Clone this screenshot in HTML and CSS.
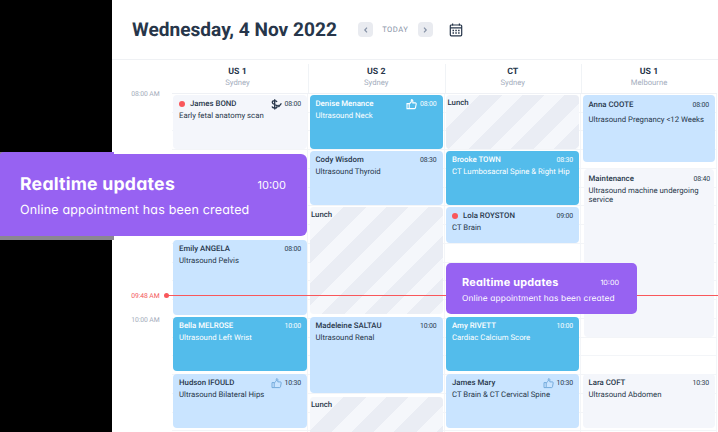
FILE: index.html
```html
<!DOCTYPE html>
<html lang="en">
<head>
<meta charset="utf-8">
<title>Schedule</title>
<link rel="stylesheet" href="styles.css">
</head>
<body>
<svg class="defs" width="0" height="0" aria-hidden="true">
  <symbol id="thumb" viewBox="0 0 11 11"><path d="M1 4.6h2.2v5H1zM3.2 5 5.3 3V1.2c0-.9 1.5-.7 1.5.5v2.2h2.5c.7 0 1 .5.9 1.1l-.7 3.7c-.1.6-.5.9-1 .9H3.2"/></symbol>
</svg>
<div class="app">
  <aside class="side"></aside>
  <main class="main">
    <header class="top">
      <h1>Wednesday, 4 Nov 2022</h1>
      <span class="step"><svg width="14" height="14" viewBox="0 0 14 14"><path d="M8 4.7 5.8 7 8 9.3"/></svg></span>
      <span class="today">TODAY</span>
      <span class="step"><svg width="14" height="14" viewBox="0 0 14 14"><path d="M6 4.7 8.2 7 6 9.3"/></svg></span>
      <svg class="cal" width="14" height="14" viewBox="0 0 14 14"><rect x="1.300" y="2" width="11.400" height="10.800" rx="1"/><path d="M1.300 4.800h11.400M3.600.5v2M10.400.5v2"/><path class="dots" d="M3.500 7.500h7.500M3.500 10h7.500"/></svg>
    </header>
    <section class="board">
      <div class="gutter">
        <span class="hour first">08:00 AM</span>
        <span class="hour now-label">09:48 AM</span>
        <span class="hour">10:00 AM</span>
      </div>
      <div class="col start">
        <div class="head"><b>US 1</b><span>Sydney</span></div>
        <div class="slots">
          <article class="card grey h54"><div class="row"><i class="dot"></i><b>James BOND</b><svg class="pay" width="11" height="11" viewBox="0 0 11 11"><path d="M6 2.900C5.600 2 4.800 1.700 3.700 1.700 2.200 1.700 1.300 2.400 1.300 3.400c0 2.400 4.800 1.400 4.800 4 0 1-.9 1.700-2.400 1.700C2.300 9.100 1.300 8.500 1 7.500M3.700.3v10.200M6.600 6l1.300 1.400 2.500-3"/></svg><time>08:00</time></div><p>Early fetal anatomy scan</p></article>
          <article class="card light emily"><div class="row"><b>Emily ANGELA</b><time>08:00</time></div><p>Ultrasound Pelvis</p></article>
          <article class="card blue h54 g2"><div class="row"><b>Bella MELROSE</b><time>10:00</time></div><p>Ultrasound Left Wrist</p></article>
          <article class="card light h54 g3"><div class="row"><b>Hudson IFOULD</b><svg class="thumb" width="11" height="11"><use href="#thumb"/></svg><time>10:30</time></div><p>Ultrasound Bilateral Hips</p></article>
        </div>
      </div>
      <div class="col">
        <div class="head"><b>US 2</b><span>Sydney</span></div>
        <div class="slots">
          <article class="card blue h54"><div class="row"><b>Denise Menance</b><svg class="thumb" width="11" height="11"><use href="#thumb"/></svg><time>08:00</time></div><p>Ultrasound Neck</p></article>
          <article class="card light h54 g2"><div class="row"><b>Cody Wisdom</b><time>08:30</time></div><p>Ultrasound Thyroid</p></article>
          <article class="card lunch long"><b>Lunch</b></article>
          <article class="card light madeleine"><div class="row"><b>Madeleine SALTAU</b><time>10:00</time></div><p>Ultrasound Renal</p></article>
          <article class="card lunch last"><b>Lunch</b></article>
        </div>
      </div>
      <div class="col">
        <div class="head"><b>CT</b><span>Sydney</span></div>
        <div class="slots">
          <article class="card lunch h54"><b>Lunch</b></article>
          <article class="card blue h54 g2"><div class="row"><b>Brooke TOWN</b><time>08:30</time></div><p>CT Lumbosacral Spine &amp; Right Hip</p></article>
          <article class="card light lola"><div class="row"><i class="dot"></i><b>Lola ROYSTON</b><time>09:00</time></div><p>CT Brain</p></article>
          <article class="card blue h54 amy"><div class="row"><b>Amy RIVETT</b><time>10:00</time></div><p>Cardiac Calcium Score</p></article>
          <article class="card light h54 g3"><div class="row"><b>James Mary</b><svg class="thumb" width="11" height="11"><use href="#thumb"/></svg><time>10:30</time></div><p>CT Brain &amp; CT Cervical Spine</p></article>
        </div>
      </div>
      <div class="col end">
        <div class="head"><b>US 1</b><span>Melbourne</span></div>
        <div class="slots">
          <article class="card light anna"><div class="row"><b>Anna COOTE</b><time>08:00</time></div><p>Ultrasound Pregnancy &lt;12 Weeks</p></article>
          <article class="card grey maint"><div class="row"><b>Maintenance</b><time>08:40</time></div><p>Ultrasound machine undergoing<br>service</p></article>
          <article class="card grey h54 lara"><div class="row"><b>Lara COFT</b><time>10:30</time></div><p>Ultrasound Abdomen</p></article>
        </div>
      </div>
    </section>
  </main>
  <div class="now"></div>
  <div class="toast-shade"></div>
  <div class="toast-edge"></div>
  <div class="toast big"><div class="trow"><strong>Realtime updates</strong><time>10:00</time></div><p>Online appointment has been created</p></div>
  <div class="toast small"><div class="trow"><strong>Realtime updates</strong><time>10:00</time></div><p>Online appointment has been created</p></div>
</div>
</body>
</html>
```
FILE: styles.css
```css
* { box-sizing: border-box; }
body { margin: 0; overflow: hidden; background: #fff; color: #27364a; font-family: Roboto, "Liberation Sans", sans-serif; text-rendering: geometricPrecision; }
p, h1 { margin: 0; }
.defs { position: absolute; }
svg { fill: none; stroke: currentColor; flex: none; }
.app { position: relative; display: flex; width: 718px; height: 432px; overflow: hidden; }
.side { width: 112px; flex: none; background: #000; }
.main { width: 606px; flex: none; }

.top { display: flex; align-items: center; height: 60px; padding-left: 20px; border-bottom: 1px solid #eff1f4; }
h1 { width: 226px; flex: none; font-size: 19.1px; line-height: 28px; font-weight: 700; color: #27364a; white-space: nowrap; }
.step { width: 15px; height: 15px; border-radius: 4px; background: #e9ebf0; color: #8591a5; display: grid; place-items: center; }
.step svg { stroke-width: 1.2; }
.today { width: 44.5px; text-align: center; font-size: 7.6px; letter-spacing: .5px; color: #8994a7; }
.cal { margin-left: 16.500px; color: #27364a; stroke-width: 1.2; }
.cal .dots { stroke-dasharray: 1.5 1.3; stroke-width: 1.3; }

.board { display: flex; height: 372px; }
.gutter { width: 60px; flex: none; padding: 28.5px 12.5px 0 0; display: flex; flex-direction: column; align-items: flex-end; }
.hour { font-size: 6.8px; line-height: 10px; color: #a4adbb; letter-spacing: -.1px; white-space: nowrap; }
.now-label { margin-top: 192px; color: #f35b60; }
.now-label + .hour { margin-top: 14px; }
.col { width: 136.5px; flex: none; }
.col.start, .col.end { width: 136px; }
.head { height: 34px; padding: 6px 0 0; border-bottom: 1px solid #eff1f5; text-align: center; display: flex; flex-direction: column; }
.start .head { padding-right: 5px; }
.head b { font-size: 8.8px; line-height: 12px; font-weight: 700; }
.head span { font-size: 7.7px; line-height: 10px; color: #a4adbd; }
.col + .col .head { background: linear-gradient(#f0f3f6, #f0f3f6) 0 100% / 1px 29px no-repeat; }
.slots { height: 338px; padding: 1px 1px 0 1.5px; display: flex; flex-direction: column; border-right: 1px solid #f3f5f8; background: repeating-linear-gradient(#fff 0 17.75px, #f3f5f8 17.75px 18.75px); }
.start .slots { padding: 1px 0 0 1px; }
.card { flex: none; border-radius: 4px; padding: 4px 6px 0 6px; overflow: hidden; font-size: 7.78px; }
.row { display: flex; align-items: center; height: 10px; }
.row b, .lunch b { font-size: 7.82px; line-height: 10px; font-weight: 500; white-space: nowrap; }
.lunch b { display: block; }
.row time { font-size: 6.9px; line-height: 10px; margin-left: auto; letter-spacing: -.13px; }
.row svg { margin-left: auto; }
.row svg + time { margin-left: 2.5px; }
.card p { margin-top: 2px; line-height: 10px; white-space: nowrap; }
.thumb { color: #6ca5d8; stroke-width: .9; }
.blue .thumb { color: #fff; stroke-width: 1.1; }
.pay { stroke-width: 1.3; }
.dot { width: 6px; height: 6px; margin-right: 5px; border-radius: 50%; background: #f9575b; flex: none; }
.grey { background: #f4f6fb; }
.light { background: #c9e4ff; }
.blue { background: #53bceb; color: #fff; }
.lunch { padding: 3px 2px 0 1.5px; background: linear-gradient(135deg, #f5f7fb 24px, transparent 24px), repeating-linear-gradient(135deg, #eaedf4 0 10px, #f5f7fb 10px 24px, #eaedf4 24px 30px); }
.h54 { height: 54px; }
.g2 { margin-top: 2px; }
.g3 { margin-top: 3px; }
.emily { height: 75px; margin-top: 91px; }
.long { height: 107px; margin-top: 2px; }
.madeleine { height: 76px; margin-top: 3px; }
.last { height: 40px; margin-top: 4px; }
.lola { height: 36px; margin-top: 2px; }
.amy { margin-top: 74px; }
.anna { height: 67px; padding-top: 5px; }
.anna p { margin-top: 5px; }
.maint { height: 168px; margin: 7px 1px 0; padding: 5px 4px 0 5px; }
.maint p { line-height: 9px; }
.lara { margin-top: 37px; }

.now { position: absolute; left: 167px; right: 0; top: 295px; height: 1px; background: #f9575b; }
.now::before { content: ""; position: absolute; left: -3px; top: -2px; width: 5px; height: 5px; border-radius: 50%; background: #f9575b; }
.toast { position: absolute; background: #9762f2; color: #fff; font-family: Inter, sans-serif; font-feature-settings: "cv11"; white-space: nowrap; }
.toast-edge { position: absolute; left: 0; top: 152px; width: 114px; height: 84px; background: #9762f2; border-radius: 4px 0 0 0; }
.toast-shade { position: absolute; left: 0; top: 152px; width: 114px; height: 88px; background: #8b8691; }
.trow { display: flex; justify-content: space-between; align-items: center; }
.big { left: 0; top: 154px; width: 307px; height: 82px; border-radius: 0 6px 6px 4px; padding: 20px 21px 0 20px; }
.big strong { font-size: 17.7px; line-height: 22px; font-weight: 700; letter-spacing: .22px; }
.big time { font-size: 11px; }
.big p { margin-top: 7px; font-size: 12.5px; line-height: 16px; font-weight: 400; letter-spacing: .18px; }
.small { left: 446px; top: 263px; width: 191px; height: 51px; border-radius: 5px; padding: 12px 18px 0 16px; }
.small strong { font-size: 10.9px; line-height: 14px; font-weight: 700; letter-spacing: .2px; }
.small time { font-size: 7.2px; }
.small p { margin-top: 4px; font-size: 8.3px; line-height: 12px; font-weight: 400; letter-spacing: .13px; }
```
